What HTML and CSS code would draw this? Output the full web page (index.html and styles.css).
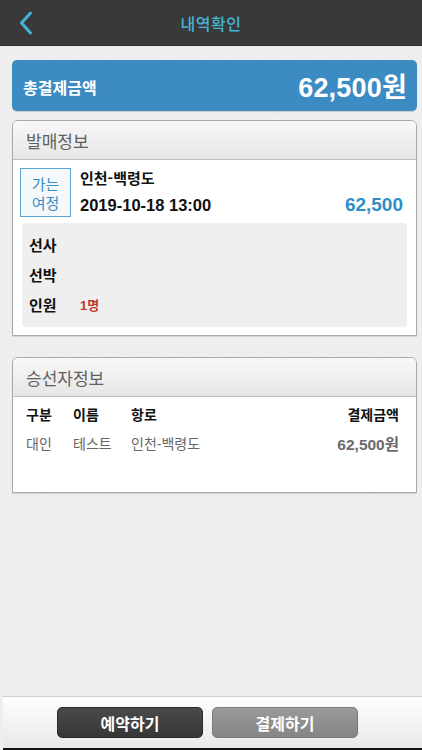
FILE: index.html
```html
<!DOCTYPE html>
<html lang="ko">
<head>
<meta charset="utf-8">
<title>내역확인</title>
<link rel="stylesheet" href="styles.css">
</head>
<body>
<div class="screen">
  <header class="topbar">
    <div class="back">
      <svg width="14" height="24" viewBox="0 0 14 24"><path d="M11.5 2 L2.5 12 L11.5 22" fill="none" stroke="#43b4d6" stroke-width="3" stroke-linecap="round" stroke-linejoin="round"/></svg>
    </div>
    <h1 class="title">내역확인</h1>
    <div class="spacer"></div>
  </header>

  <main class="content">
    <section class="total">
      <span class="total-label">총결제금액</span>
      <span class="total-amount">62,500원</span>
    </section>

    <section class="card card-issue">
      <div class="card-head">발매정보</div>
      <div class="card-body">
        <div class="trip">
          <div class="badge"><span>가는</span><span>여정</span></div>
          <div class="trip-info">
            <div class="route">인천-백령도</div>
            <div class="trip-line">
              <span class="date">2019-10-18 13:00</span>
              <span class="price">62,500</span>
            </div>
          </div>
        </div>
        <div class="detail">
          <div class="drow"><span class="dlabel">선사</span></div>
          <div class="drow"><span class="dlabel">선박</span></div>
          <div class="drow"><span class="dlabel">인원</span><span class="dval">1명</span></div>
        </div>
      </div>
    </section>

    <section class="card card-pass">
      <div class="card-head">승선자정보</div>
      <div class="card-body table">
        <div class="trow thead">
          <span class="c1">구분</span><span class="c2">이름</span><span class="c3">항로</span><span class="c4">결제금액</span>
        </div>
        <div class="trow tdata">
          <span class="c1">대인</span><span class="c2">테스트</span><span class="c3">인천-백령도</span><span class="c4 amt">62,500원</span>
        </div>
      </div>
    </section>
  </main>

  <footer class="bottombar">
    <button class="btn btn-dark">예약하기</button>
    <button class="btn btn-gray">결제하기</button>
  </footer>
</div>
</body>
</html>
```

FILE: styles.css
```css
* { box-sizing: border-box; }
html, body { margin: 0; padding: 0; }
body {
  font-family: "Liberation Sans", "Noto Sans CJK KR", sans-serif;
  background: #efefef;
}
.screen {
  width: 422px;
  height: 750px;
  display: flex;
  flex-direction: column;
  background-color: #efefef;
  background-image: repeating-linear-gradient(120deg, #f1f1f1 0 1px, #ededed 1px 3px, #efefef 3px 4px);
}
.topbar {
  height: 46px;
  flex: none;
  background: #393939;
  display: grid;
  grid-template-columns: 60px 1fr 60px;
  align-items: center;
  border-bottom: 1px solid #2e2e2e;
}
.back { padding-left: 19px; display: flex; align-items: center; height: 100%; }
.title {
  margin: 0;
  text-align: center;
  font-size: 16px;
  font-weight: 500;
  color: #45b5d6;
  font-family: "Noto Sans CJK KR", sans-serif;
  letter-spacing: 0.5px;
}
.content {
  flex: 1;
  padding: 14px 5px 0 12px;
  display: flex;
  flex-direction: column;
}
.total {
  height: 51px;
  background: #3d8bc3;
  border-radius: 5px;
  display: flex;
  align-items: center;
  justify-content: space-between;
  padding: 0 10px 0 11px;
  color: #fff;
  box-shadow: 0 1px 1px rgba(0,0,0,0.15);
}
.total-label { font-size: 16px; font-weight: 700; font-family: "Noto Sans CJK KR", sans-serif; margin-top: 2px; }
.total-amount { font-size: 27px; font-weight: 700; letter-spacing: 0.2px; }

.card {
  background: #fff;
  border: 1px solid #a9a9a9;
  border-radius: 6px 6px 0 0;
  box-shadow: 0 1px 1px rgba(0,0,0,0.12);
}
.card-issue { margin-top: 9px; }
.card-pass { margin-top: 21px; }
.card-head {
  height: 39px;
  display: flex;
  align-items: center;
  padding-left: 13px;
  font-size: 17px;
  color: #606060;
  font-family: "Noto Sans CJK KR", sans-serif;
  background: linear-gradient(#f8f8f8, #e6e6e6);
  border-bottom: 1px solid #bdbdbd;
  border-radius: 5px 5px 0 0;
}
.card-issue .card-body { padding: 8px 9px 8px 7px; }
.trip { display: flex; align-items: flex-start; }
.badge {
  width: 51px;
  height: 49px;
  border: 1.5px solid #5ba4d4;
  background: #f6f9fc;
  display: flex;
  flex-direction: column;
  align-items: center;
  justify-content: center;
  color: #3a8cc3;
  font-size: 15px;
  line-height: 19px;
  font-family: "Noto Sans CJK KR", sans-serif;
}
.trip-info { flex: 1; padding-left: 9px; }
.route {
  font-size: 15px;
  font-weight: 700;
  color: #111;
  line-height: 20px;
  font-family: "Noto Sans CJK KR", sans-serif;
}
.trip-line {
  display: flex;
  justify-content: space-between;
  align-items: baseline;
  margin-top: 6px;
  padding-right: 4px;
}
.date { font-size: 16.5px; font-weight: 700; color: #111; }
.price { font-size: 19px; font-weight: 700; color: #2f8ec6; }
.detail {
  margin-top: 6px;
  margin-left: 2px;
  background: #efefef;
  border-radius: 4px;
  padding: 6px 7px 8px;
}
.drow { height: 30px; display: flex; align-items: center; }
.dlabel {
  width: 51px;
  font-size: 15px;
  font-weight: 700;
  color: #111;
  font-family: "Noto Sans CJK KR", sans-serif;
}
.dval { font-size: 13px; font-weight: 700; color: #c0392b; }

.table { padding: 2px 17px 35px 13px; }
.trow { display: flex; align-items: center; height: 29px; font-family: "Liberation Sans", "Noto Sans CJK KR", sans-serif; }
.thead { font-size: 14px; font-weight: 700; color: #111; }
.tdata { font-size: 14px; color: #666; }
.tdata .amt { font-size: 15.5px; font-weight: 700; color: #6a6a6a; }
.c1 { width: 47px; }
.c2 { width: 58px; }
.c3 { flex: 1; }
.c4 { text-align: right; }

.bottombar {
  flex: none;
  height: 54px;
  margin-left: 3px;
  background: linear-gradient(#ffffff, #e8e8e8);
  border-top: 1px solid #cfcfcf;
  border-bottom: 2px solid #111;
  display: flex;
  justify-content: center;
  align-items: flex-start;
  gap: 9px;
  padding: 10px 10px 0 0;
}
.btn {
  width: 146px;
  height: 31px;
  border: none;
  border-radius: 5px;
  color: #fff;
  font-size: 16px;
  font-weight: 700;
  font-family: "Noto Sans CJK KR", sans-serif;
  padding: 0;
}
.btn-dark { background: linear-gradient(#4a4a4a, #363636); border: 1px solid #2a2a2a; }
.btn-gray { background: linear-gradient(#9a9a9a, #858585); border: 1px solid #7a7a7a; }
```
